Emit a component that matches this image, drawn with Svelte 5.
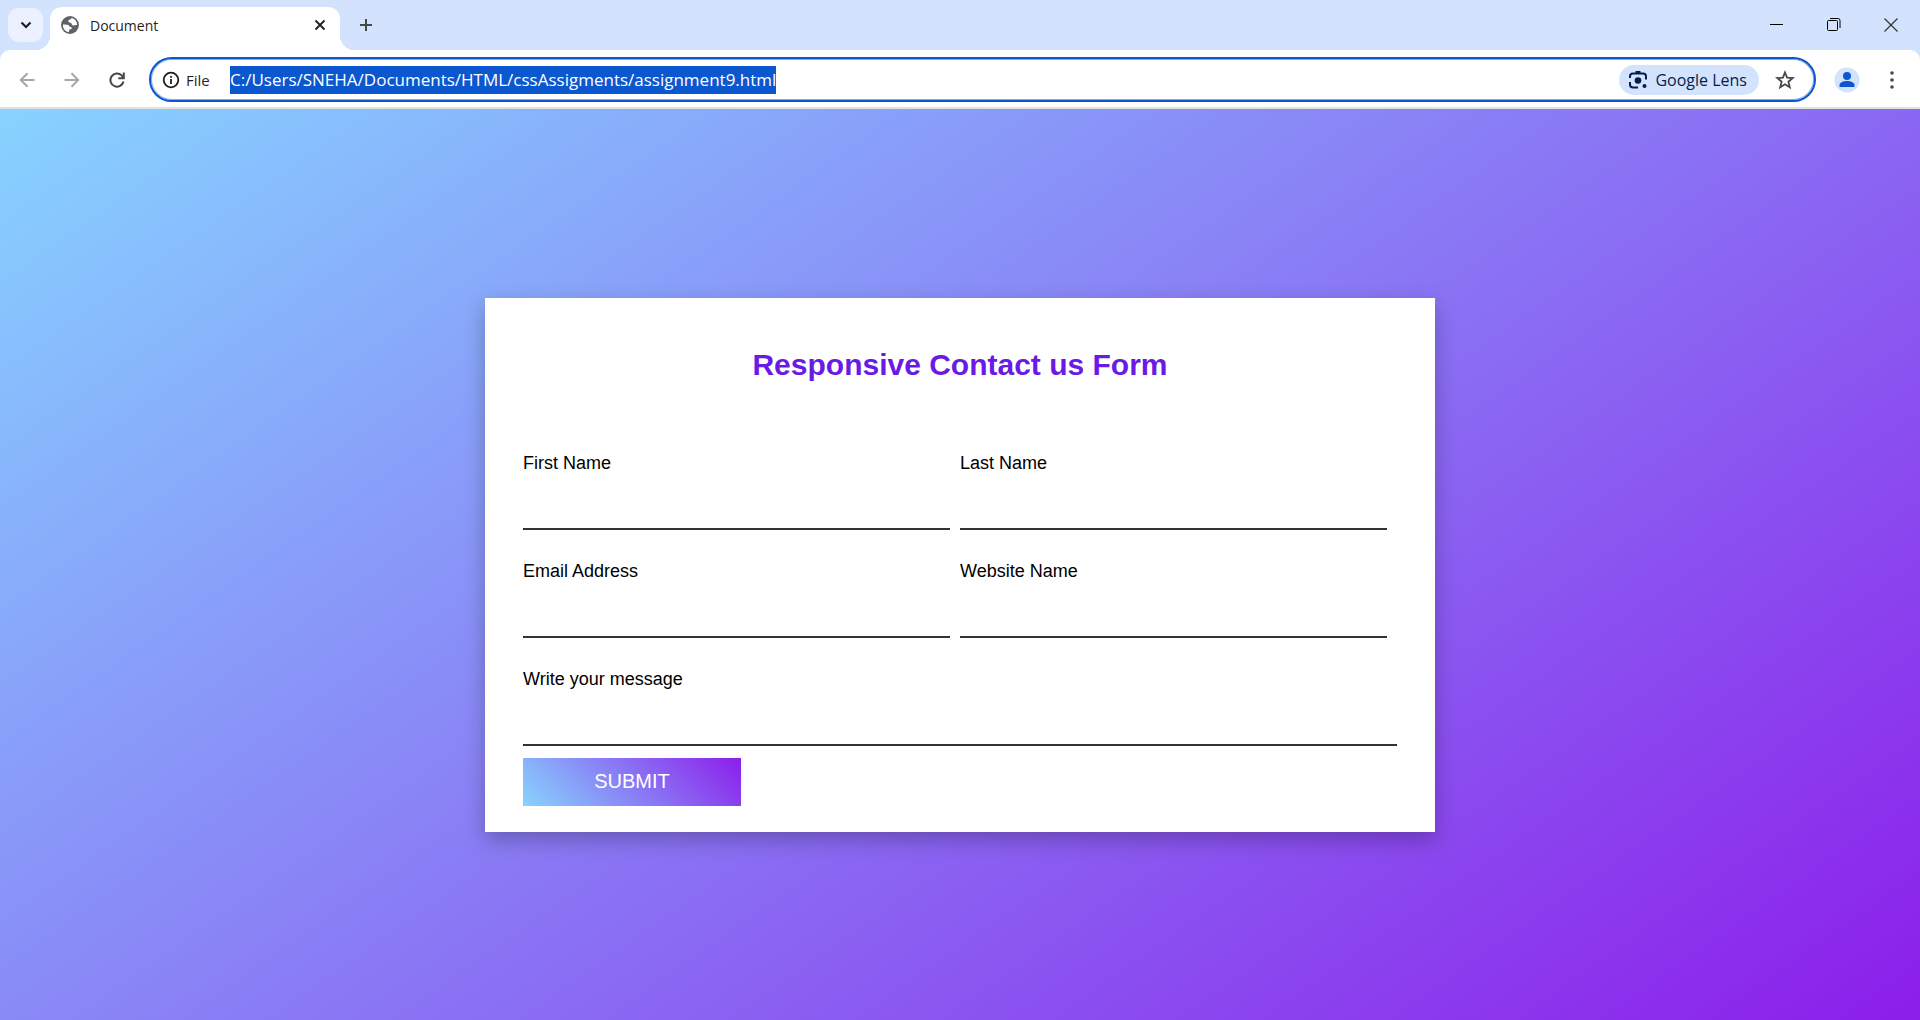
<script>
  const fields = [
    { id: 'first', label: 'First Name' },
    { id: 'last', label: 'Last Name' },
    { id: 'email', label: 'Email Address' },
    { id: 'website', label: 'Website Name' },
    { id: 'message', label: 'Write your message', wide: true }
  ];
  let url = $state('C:/Users/SNEHA/Documents/HTML/cssAssigments/assignment9.html');
</script>

<div class="browser">
  <header>
    <div class="tabstrip">
      <button class="tabsearch" aria-label="Search tabs">
        <svg width="16" height="16" viewBox="0 0 16 16" fill="none" stroke="#1f1f1f" stroke-width="2.200"><path d="M3.500 5.500 8 10l4.500-4.500" /></svg>
      </button>
      <div class="tab">
        <svg width="20" height="20" viewBox="0 0 24 24" fill="#5f6368"><circle cx="12" cy="12" r="10.700" /><path fill="#fff" d="M3.500 11.500c2.500-.5 5-.2 6.500.5 1.500.8 1 2.500 2.500 2.500 1.500.2 2 .8 1.500 2l-2.500 1c-.8.700-.3 2-1 3.200C6 20 3.200 16 3.500 11.500ZM13.500 3.600C13.500 6 10 5 10 7.500c0 2 2.500 1 3.500 2.500s.5 2.500 2.500 2.700c1.500.1 2-1 4.500-.7C20.500 7.500 17.500 4 13.500 3.600Z" /></svg>
        <span class="tabtitle">Document</span>
        <button class="close" aria-label="Close tab">
          <svg width="12" height="12" viewBox="0 0 12 12" stroke="#1f1f1f" stroke-width="1.800"><path d="m1.500 1.500 9 9m0-9-9 9" /></svg>
        </button>
      </div>
      <button class="newtab" aria-label="New tab">
        <svg width="14" height="14" viewBox="0 0 14 14" stroke="#474747" stroke-width="2"><path d="M7 1v12M1 7h12" /></svg>
      </button>
      <div class="window">
        <button aria-label="Minimize"><svg width="14" height="14" viewBox="0 0 14 14" stroke="#000"><path d="M0 6.500h13" /></svg></button>
        <button aria-label="Restore"><svg width="14" height="14" viewBox="0 0 14 14" stroke="#000" fill="none"><rect x=".5" y="2.500" width="10" height="10" rx="1" /><path d="M3 .5h8a2 2 0 0 1 2 2V10" /></svg></button>
        <button aria-label="Close"><svg width="14" height="14" viewBox="0 0 14 14" stroke="#333" stroke-width="1.200"><path d="m.5.500 13 13m0-13-13 13" /></svg></button>
      </div>
    </div>
    <div class="toolbar">
      <button class="nav" aria-label="Back"><svg width="16" height="16" viewBox="0 0 16 16" fill="none" stroke="#a8a8a8" stroke-width="2"><path d="M15.500 8H2m6.500-6.700L1.800 8l6.700 6.700" /></svg></button>
      <button class="nav" aria-label="Forward"><svg width="16" height="16" viewBox="0 0 16 16" fill="none" stroke="#a8a8a8" stroke-width="2"><path d="M.5 8H14M7.500 1.300 14.200 8l-6.700 6.700" /></svg></button>
      <button class="nav" aria-label="Reload"><svg width="16" height="16" viewBox="0 0 16 16" fill="none" stroke="#474747" stroke-width="2"><path d="M14.500 9.500A6.600 6.600 0 1 1 12.700 3.400L14.500 5.500M14.800.5v5.700H9.300" /></svg></button>
      <div class="omnibox">
        <svg width="18" height="18" viewBox="0 0 18 18" fill="none" stroke="#1f1f1f" stroke-width="1.800"><circle cx="9" cy="9" r="7.300" /><path d="M9 8v5M9 5v1.800" /></svg>
        <span class="scheme">File</span>
        <input class="url" aria-label="Address" bind:value={url} />
        <button class="lens">
          <svg width="20" height="20" viewBox="0 0 20 20" fill="none" stroke="#041e49" stroke-width="2"><path d="M2 8V6.500A3 3 0 0 1 5 3.500h10a3 3 0 0 1 3 3V9.500M2 12v2.500a3 3 0 0 0 3 3h5" /><path d="M7.500 2.500h5" stroke-width="3" /><circle cx="10" cy="10.500" r="3.300" fill="#041e49" stroke="none" /><circle cx="16.500" cy="16" r="2" fill="#041e49" stroke="none" /></svg>
          Google Lens
        </button>
        <button class="star" aria-label="Bookmark"><svg width="20" height="20" viewBox="0 0 20 20" fill="none" stroke="#474747" stroke-width="1.800"><path d="m10 2.500 2.100 5.200 5.600.4-4.300 3.600 1.400 5.500L10 14.200l-4.800 3 1.400-5.500L2.300 8.100l5.600-.4Z" /></svg></button>
      </div>
      <button class="profile" aria-label="Profile"><svg width="26" height="26" viewBox="0 0 26 26"><circle cx="13" cy="13" r="12.500" fill="#d3e3fd" /><g fill="#0b57d0"><circle cx="13" cy="9" r="4" /><path d="M5.500 20v-2c0-2.500 4-4 7.500-4s7.500 1.500 7.500 4v2Z" /></g></svg></button>
      <button class="more" aria-label="Menu"><svg width="4" height="18" viewBox="0 0 4 18" fill="#474747"><circle cx="2" cy="2" r="1.800" /><circle cx="2" cy="9" r="1.800" /><circle cx="2" cy="16" r="1.800" /></svg></button>
    </div>
  </header>

  <main>
    <form onsubmit={(e) => e.preventDefault()}>
      <h1>Responsive Contact us Form</h1>
      <div class="fields">
        {#each fields as field}
          <div class="field" class:wide={field.wide}>
            <label for={field.id}>{field.label}</label>
            <input id={field.id} type="text" />
          </div>
        {/each}
      </div>
      <button class="submit">SUBMIT</button>
    </form>
  </main>
</div>

<style>
  :global(body) {
    margin: 0;
  }
  .browser {
    display: flex;
    flex-direction: column;
    min-height: 100vh;
    font-family: 'Liberation Sans', Arial, sans-serif;
  }
  button {
    display: flex;
    align-items: center;
    justify-content: center;
    flex: none;
    padding: 0;
    border: 0;
    background: none;
    cursor: pointer;
  }
  svg {
    flex: none;
  }
  header {
    background: #d3e3fd;
    border-bottom: 2px solid #e0e2e0;
    font-family: 'Open Sans', 'Noto Sans', sans-serif;
  }
  .tabstrip {
    display: flex;
    height: 50px;
    padding-left: 8px;
  }
  .tabsearch {
    align-self: flex-start;
    width: 35px;
    height: 34px;
    margin: 8px 7px 0 0;
    border-radius: 11px;
    background: #ebf1fe;
  }
  .tab {
    position: relative;
    display: flex;
    align-items: center;
    box-sizing: border-box;
    width: 290px;
    height: 43px;
    margin-top: 7px;
    padding: 0 14px 7px 10px;
    border-radius: 12px 12px 0 0;
    background: #fff;
  }
  .tab::before,
  .tab::after {
    content: '';
    position: absolute;
    bottom: 0;
    width: 14px;
    height: 14px;
  }
  .tab::before {
    right: 100%;
    background: radial-gradient(circle at 0 0, transparent 14px, #fff 14px);
  }
  .tab::after {
    left: 100%;
    background: radial-gradient(circle at 100% 0, transparent 14px, #fff 14px);
  }
  .tabtitle {
    flex: 1;
    margin-left: 10px;
    color: #1f1f1f;
    font-size: 14px;
  }
  .newtab {
    align-self: flex-start;
    width: 34px;
    height: 34px;
    margin: 8px 0 0 9px;
  }
  .window {
    display: flex;
    height: 49px;
    margin-left: auto;
    padding-right: 1px;
  }
  .window button {
    width: 57px;
  }
  .toolbar {
    display: flex;
    align-items: center;
    box-sizing: border-box;
    height: 57px;
    padding: 2px 18px 0 4px;
    border-radius: 10px 10px 0 0;
    background: #fff;
  }
  .nav {
    width: 45px;
    height: 36px;
  }
  .omnibox {
    display: flex;
    flex: 1;
    align-items: center;
    box-sizing: border-box;
    height: 45px;
    margin-left: 10px;
    padding: 0 19px 0 11px;
    border: 2px solid #0b57d0;
    border-radius: 23px;
    box-shadow: inset 0 0 0 1px #85abe8;
  }
  .scheme {
    width: 44px;
    margin-left: 6px;
    color: #1f1f1f;
    font-size: 15px;
  }
  .url {
    field-sizing: content;
    height: 28px;
    padding: 0;
    border: 0;
    outline: 0;
    background: #0b57d0;
    color: #fff;
    font: 17px 'Open Sans', 'Noto Sans', sans-serif;
  }
  .lens {
    gap: 7px;
    height: 30px;
    margin-left: auto;
    padding: 0 12px 0 9px;
    border-radius: 15px;
    background: #d3e3fd;
    color: #041e49;
    font: 500 16px 'Open Sans', 'Noto Sans', sans-serif;
  }
  .star {
    margin-left: 16px;
  }
  .profile {
    margin-left: 18px;
  }
  .more {
    width: 20px;
    margin-left: 22px;
  }
  main {
    display: flex;
    flex: 1;
    align-items: center;
    justify-content: center;
    padding: 20px;
    background: linear-gradient(145deg, #87d3ff, #8c1eea);
  }
  form {
    box-sizing: border-box;
    width: 100%;
    max-width: 950px;
    padding: 49px 38px 26px;
    background: #fff;
    box-shadow: 0 8px 20px rgb(0 0 0 / 25%);
  }
  h1 {
    margin: 0 0 60px;
    color: #6a1ae6;
    font-size: 30px;
    line-height: 36px;
    text-align: center;
  }
  .fields {
    display: grid;
    grid-template-columns: 1fr 1fr;
    row-gap: 21px;
  }
  .field {
    padding-right: 10px;
  }
  .wide {
    grid-column: 1 / -1;
    padding-right: 0;
  }
  .field label {
    display: block;
    padding-top: 10px;
    font-size: 18px;
    line-height: 20px;
  }
  .field input {
    display: block;
    box-sizing: border-box;
    width: 100%;
    height: 57px;
    padding: 10px 0;
    border: 0;
    border-bottom: 2px solid #333;
    outline: 0;
    font-size: 18px;
  }
  .submit {
    width: 218px;
    height: 48px;
    margin-top: 12px;
    background: linear-gradient(45deg, #87d3ff, #8c1eea);
    color: #fff;
    font: 20px 'Liberation Sans', Arial, sans-serif;
  }
</style>
